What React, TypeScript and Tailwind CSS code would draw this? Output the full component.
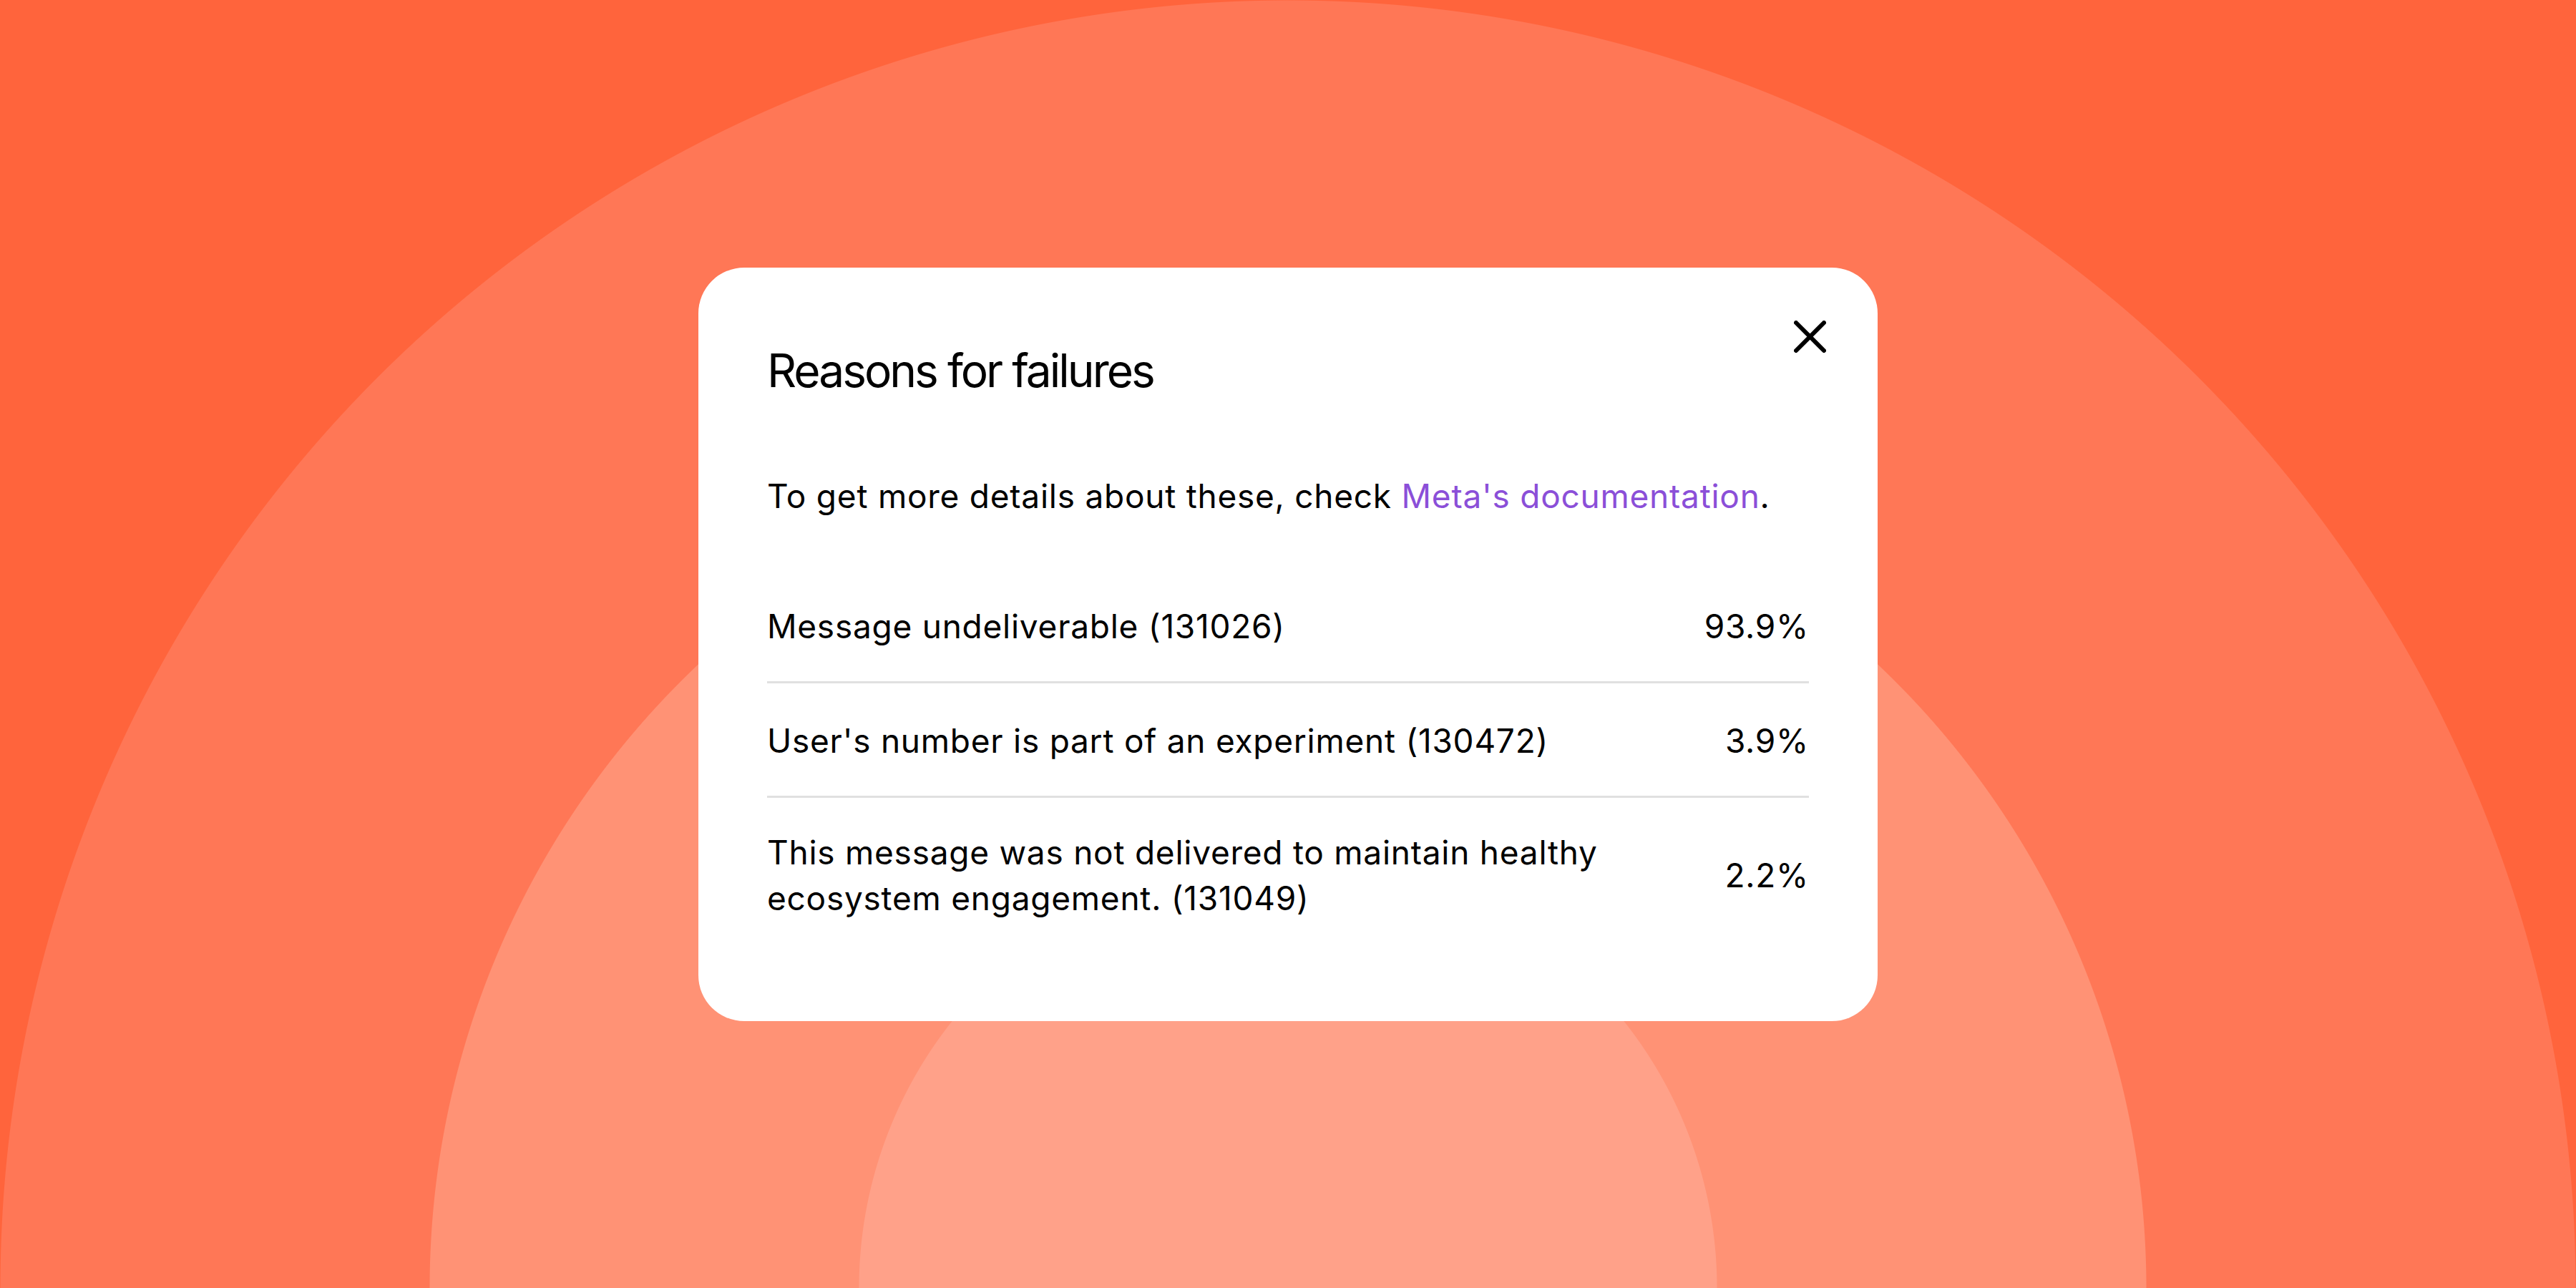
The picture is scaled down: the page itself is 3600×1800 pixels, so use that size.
const reasons = [
  { label: 'Message undeliverable (131026)', value: '93.9%' },
  { label: "User's number is part of an experiment (130472)", value: '3.9%' },
  {
    label: 'This message was not delivered to maintain healthy ecosystem engagement. (131049)',
    value: '2.2%',
  },
];

export default function App() {
  return (
    <div
      className="w-[3600px] h-[1800px] flex items-center justify-center bg-[#ff643c] bg-[radial-gradient(circle_at_50%_100%,#ffa189_0px,#ffa189_599px,#ff9275_600px,#ff9275_1199px,#ff7756_1200px,#ff7756_1799px,#ff643c_1800px)]"
      style={{ fontFamily: 'Inter, "Open Sans", sans-serif' }}
    >
      <div className="relative w-[1648px] bg-white rounded-[64px] pt-[104px] px-[96px] pb-[92px] text-black">
        <button className="absolute top-[74px] right-[72px] w-[45px] h-[45px]">
          <svg viewBox="0 0 45 45" className="w-[45px] h-[45px]">
            <path d="M3 3 L42 42 M42 3 L3 42" stroke="#000" strokeWidth="6" strokeLinecap="round" fill="none" />
          </svg>
        </button>

        <h2 className="text-[64px] leading-[80px] font-normal tracking-[-3px]">Reasons for failures</h2>

        <p className="mt-[103px] text-[46px] leading-[64px] tracking-[0.75px]">
          To get more details about these, check{' '}
          <a className="text-[#8b4fd8]">Meta's documentation</a>.
        </p>

        <div className="mt-[70px] text-[46px] leading-[64px] tracking-[0.75px]">
          {reasons.map((r, i) => (
            <div
              key={r.value}
              className={`flex items-center justify-between gap-[80px] ${
                i < reasons.length - 1 ? 'pt-[48px] pb-[45px] border-b-[3px] border-[#e0e0e0]' : 'pt-[44px] pb-[48px]'
              }`}
            >
              <span className="max-w-[1200px]">{r.label}</span>
              <span className="shrink-0">{r.value}</span>
            </div>
          ))}
        </div>
      </div>
    </div>
  );
}
